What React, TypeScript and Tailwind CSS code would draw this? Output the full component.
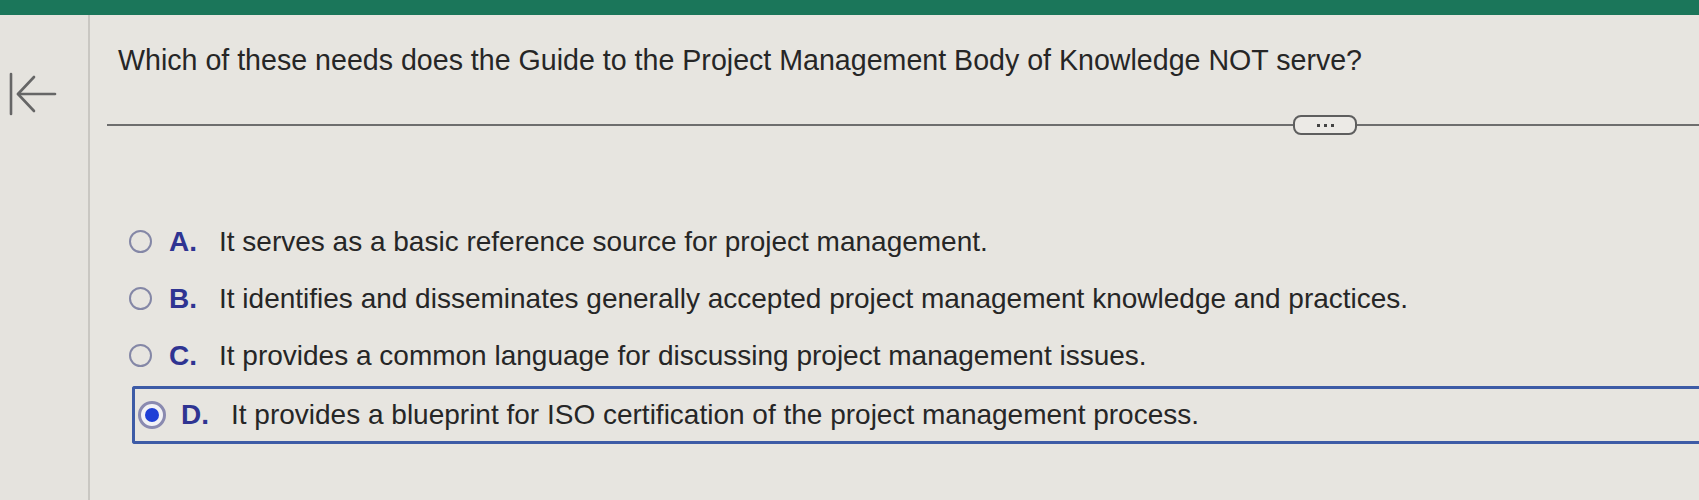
const options = [
  { key: 'A', text: 'It serves as a basic reference source for project management.' },
  { key: 'B', text: 'It identifies and disseminates generally accepted project management knowledge and practices.' },
  { key: 'C', text: 'It provides a common language for discussing project management issues.' },
  { key: 'D', text: 'It provides a blueprint for ISO certification of the project management process.' },
]

function Radio({ checked }: { checked?: boolean }) {
  if (checked) {
    return (
      <span className="flex h-[28px] w-[28px] shrink-0 items-center justify-center rounded-full border-[3px] border-[#8a8ab0] bg-[#f2f2f6]">
        <span className="h-[14px] w-[14px] rounded-full bg-[#1f3fd6]" />
      </span>
    )
  }
  return <span className="h-[23px] w-[23px] shrink-0 rounded-full border-[2.5px] border-[#8487a6]" />
}

export default function App() {
  const selected = 'D'
  return (
    <div
      className="flex h-[500px] w-[1699px] flex-col overflow-hidden bg-[#e7e5e0] text-[#262626]"
      style={{ fontFamily: '"Liberation Sans", Arial, sans-serif' }}
    >
      <div className="h-[15px] bg-[#1b765a]" />
      <div className="flex flex-1">
        <aside className="w-[90px] shrink-0 border-r-2 border-[#c9c7c2] bg-[#e5e3de] pt-[56px] pl-[9px]">
          <svg width="48" height="46" viewBox="0 0 48 46" fill="none" stroke="#666" strokeWidth="2.6" strokeLinecap="round" strokeLinejoin="round">
            <path d="M2 3v40" />
            <path d="M9 23h37" />
            <path d="M25 6L9 23l16 17" />
          </svg>
        </aside>

        <main className="flex flex-1 flex-col pl-[17px] pt-[28px]">
          <h1 className="pl-[11px] text-[28.6px] leading-[34px]">
            Which of these needs does the Guide to the Project Management Body of Knowledge NOT serve?
          </h1>

          <div className="mt-[38px] flex items-center">
            <div className="h-[2px] w-[1186px] bg-[#6e6e6e]" />
            <button className="flex h-[20px] w-[64px] items-center justify-center gap-[4px] rounded-[8px] border-2 border-[#5e5e5e] bg-[#eceae6]">
              <span className="h-[3px] w-[3px] bg-[#444]" />
              <span className="h-[3px] w-[3px] bg-[#444]" />
              <span className="h-[3px] w-[3px] bg-[#444]" />
            </button>
            <div className="h-[2px] flex-1 bg-[#6e6e6e]" />
          </div>

          <ul className="mt-[78px] flex flex-col pl-[16px]">
            {options.map((o) => {
              const isSel = o.key === selected
              return (
                <li
                  key={o.key}
                  className={
                    isSel
                      ? 'ml-[9px] mt-[2px] flex h-[58px] items-center rounded-l-[3px] border-y-[3px] border-l-[3px] border-[#3d5ba6] pl-[3px]'
                      : 'flex h-[57px] items-center pl-[6px]'
                  }
                >
                  <Radio checked={isSel} />
                  <span className={isSel ? 'ml-[15px] w-[50px] text-[28px] font-bold text-[#2f3492]' : 'ml-[17px] w-[50px] text-[28px] font-bold text-[#2f3492]'}>
                    {o.key}.
                  </span>
                  <span className="text-[28px] leading-[32px]">{o.text}</span>
                </li>
              )
            })}
          </ul>
        </main>
      </div>
    </div>
  )
}
